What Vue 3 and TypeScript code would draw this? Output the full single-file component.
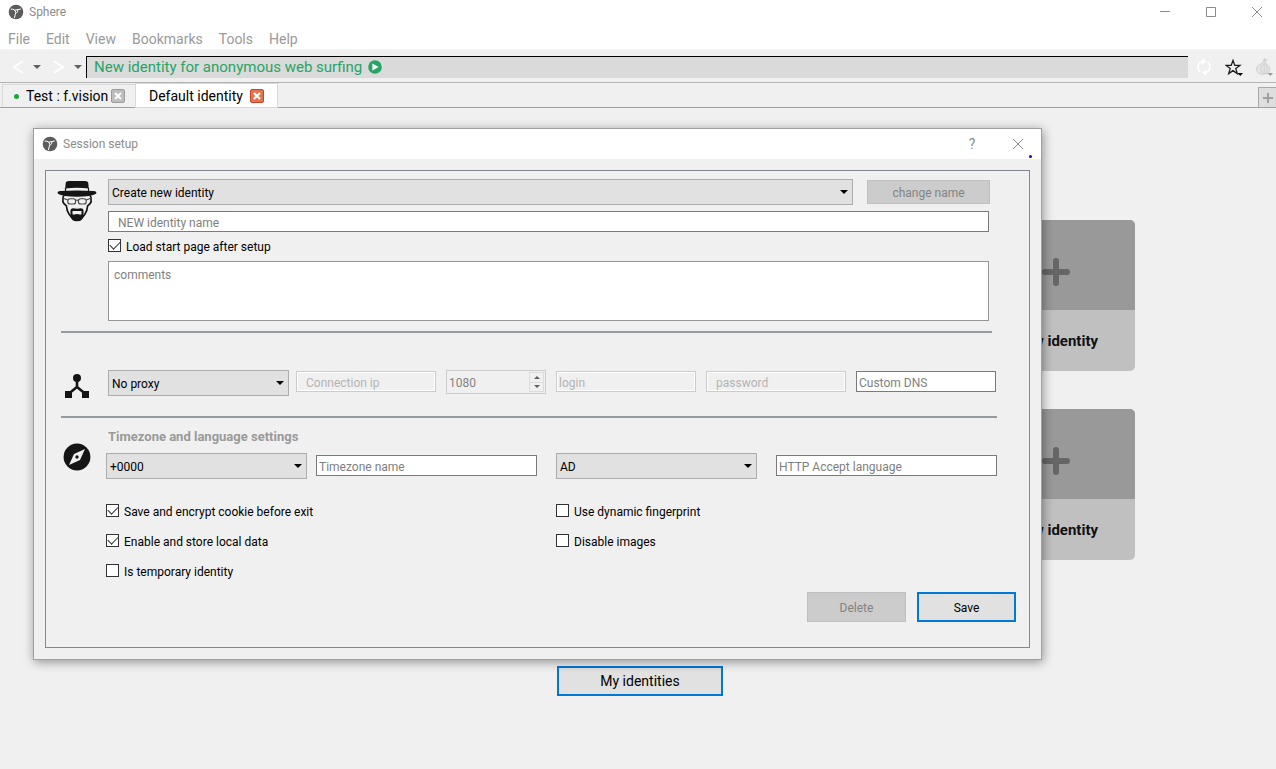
<script setup lang="ts">
import { ref } from 'vue'

interface Tick {
  id: string
  label: string
  checked: boolean
}

const menus: string[] = ['File', 'Edit', 'View', 'Bookmarks', 'Tools', 'Help']
const cards: string[] = ['New identity', 'New identity']

const address = ref('New identity for anonymous web surfing')
const loadStart = ref(true)
const port = ref('1080')
const ticks = ref<Tick[]>([
  { id: 'cookies', label: 'Save and encrypt cookie before exit', checked: true },
  { id: 'fingerprint', label: 'Use dynamic fingerprint', checked: false },
  { id: 'local', label: 'Enable and store local data', checked: true },
  { id: 'images', label: 'Disable images', checked: false },
  { id: 'temporary', label: 'Is temporary identity', checked: false },
])
</script>

<template>
  <div class="window">
    <header class="titlebar">
      <svg class="logo" viewBox="0 0 16 16" aria-hidden="true">
        <circle cx="8" cy="8" r="7.3" />
        <path d="M2.8 5.2Q5 4.6 7 6.4M6.6 6.2L12.8 5M9.8 5.8Q10.2 8 8 9.4M7 6.4Q8.4 8.4 7.4 10L6.4 14" />
      </svg>
      <span class="title">Sphere</span>
      <div class="win-controls">
        <button type="button" aria-label="Minimize"><svg viewBox="0 0 12 12"><path d="M1 5.5h10" /></svg></button>
        <button type="button" aria-label="Maximize"><svg viewBox="0 0 12 12"><path d="M1.5 1.5h9v9h-9z" /></svg></button>
        <button type="button" aria-label="Close"><svg viewBox="0 0 12 12"><path d="M1 1l10 10M11 1L1 11" /></svg></button>
      </div>
    </header>

    <nav class="menubar">
      <button v-for="m in menus" :key="m" type="button">{{ m }}</button>
    </nav>

    <div class="toolbar">
      <button class="chev" type="button" aria-label="Back"><svg viewBox="0 0 12 14"><path d="M11 1L2 7l9 6" /></svg></button>
      <button class="drop" type="button" aria-label="Back history"><svg viewBox="0 0 8 4"><path d="M0 0h8L4 4z" /></svg></button>
      <button class="chev" type="button" aria-label="Forward"><svg viewBox="0 0 12 14"><path d="M1 1l9 6-9 6" /></svg></button>
      <button class="drop" type="button" aria-label="Forward history"><svg viewBox="0 0 8 4"><path d="M0 0h8L4 4z" /></svg></button>
      <div class="address">
        <input v-model="address" type="text" aria-label="Address" />
        <button type="button" aria-label="Go">
          <svg viewBox="0 0 14 14"><circle cx="7" cy="7" r="6.8" fill="#27a567" /><path d="M4.4 3.4L10.6 7l-6.200 3.600z" fill="#fff" /></svg>
        </button>
      </div>
      <div class="tools">
        <button type="button" aria-label="Reload">
          <svg viewBox="0 0 18 20"><g fill="none" stroke="#fff" stroke-width="1.6"><path d="M5.2 15A6 6 0 0 1 7.6 4.4M12.6 5A6 6 0 0 1 10.4 15.6" /></g><path d="M7 1l4.2 3.3L7 7.6zM11 12.4v6.6L6.8 15.7z" fill="#fff" /></svg>
        </button>
        <button type="button" aria-label="Bookmark this page">
          <svg viewBox="0 0 18 20"><path d="M8 3.4l1.8 5h5.1l-4.100 3.200 1.500 5-4.300-3-4.300 3 1.500-5L1.100 8.400h5.100z" fill="none" stroke="#1c1c1c" stroke-width="1.3" /><path d="M12.5 16H18l-2.700 3z" fill="#000" /></svg>
        </button>
        <button type="button" aria-label="Tor">
          <svg viewBox="0 0 18 20"><path d="M9.4 1.500C8.800 3.400 8.600 4.600 6.800 6.200 4 8 1.500 9.400 1.500 12.400c0 3.200 3 4.900 6.700 4.900s6.700-1.700 6.700-4.900c0-3-2.500-4.300-4.500-6.200C9.800 5 11 3.200 12 2.500 10.600 2.600 9.800 3.400 9.400 4z" fill="#e4e4e4" stroke="#c6c6c6" stroke-width=".8" /><path d="M8.600 6.400C5.600 9 4.800 13 7.800 16.600M9.200 6.400V17M9.800 6.400C12.800 9 13.200 13.200 10.800 16.200" fill="none" stroke="#cdcdcd" stroke-width=".9" /><path d="M12.500 16H18l-2.700 3z" fill="#999" /></svg>
        </button>
      </div>
    </div>

    <div class="tabs">
      <div class="tab">
        <i class="dot"></i>
        <button class="tab-name" type="button">Test : f.vision</button>
        <button class="tab-close" type="button" aria-label="Close Test tab"><svg viewBox="0 0 8 8"><path d="M1 1l6 6M7 1L1 7" /></svg></button>
      </div>
      <div class="tab active">
        <button class="tab-name" type="button">Default identity</button>
        <button class="tab-close hot" type="button" aria-label="Close Default identity tab"><svg viewBox="0 0 8 8"><path d="M1 1l6 6M7 1L1 7" /></svg></button>
      </div>
      <button class="tab-add" type="button" aria-label="New tab"><svg viewBox="0 0 10 10"><path d="M5 0v10M0 5h10" /></svg></button>
    </div>

    <main class="page">
      <div class="cards">
        <button v-for="(c, i) in cards" :key="i" class="card" type="button">
          <span class="card-top"><svg viewBox="0 0 30 30"><path d="M15 4v22M4 15h22" /></svg></span>
          <span class="card-name">{{ c }}</span>
        </button>
      </div>
      <button class="primary mine" type="button">My identities</button>

      <section class="dialog" role="dialog" aria-labelledby="dialog-title">
        <header class="dialog-bar">
          <svg class="logo" viewBox="0 0 16 16" aria-hidden="true">
            <circle cx="8" cy="8" r="7.3" />
            <path d="M2.8 5.2Q5 4.6 7 6.4M6.6 6.2L12.8 5M9.8 5.8Q10.2 8 8 9.4M7 6.4Q8.4 8.4 7.4 10L6.4 14" />
          </svg>
          <span id="dialog-title" class="title">Session setup</span>
          <div class="win-controls">
            <button type="button">?</button>
            <button type="button" aria-label="Close dialog"><svg viewBox="0 0 12 12"><path d="M1 1l10 10M11 1L1 11" /></svg></button>
          </div>
          <i class="mark"></i>
        </header>

        <form class="panel" @submit.prevent>
          <div class="group identity">
            <svg class="face" viewBox="0 0 40 42" aria-hidden="true">
              <path d="M8.8 2.5Q9 1 12 1h16q3 0 3.2 1.5L31.8 8.500Q20 7.200 8.200 8.500z" fill="#151515" />
              <path d="M8.5 8v4M31.5 8v4" stroke="#151515" stroke-width="1.2" />
              <path d="M.5 13q0-2 3-1.900Q20 9.800 36.500 11.100q3-.1 3 1.900-.4 1.800-7.500 2.900-12 1.500-24 0Q.9 14.800.5 13z" fill="#151515" />
              <path d="M7 15.500Q5.400 17 6 19.500q-.8 2 1 4.200L9.400 26q.4 4.800 2.600 8l4 5M33 15.500q1.600 1.500 1 4 .8 2-1 4.200L30.600 26q-.4 4.800-2.600 8l-4 5" fill="none" stroke="#151515" stroke-width="1.7" />
              <g fill="none" stroke="#444" stroke-width="1.1"><rect x="10.800" y="18.800" width="7.800" height="5.200" rx="2.300" /><rect x="21.400" y="18.800" width="7.800" height="5.200" rx="2.300" /><path d="M18.600 20.400q1.400-.8 2.800 0M10.800 20L7 18.600M29.200 20l3.800-1.400" /></g>
              <path d="M13.500 30q.4-1.800 2.500-1.800l4 .5 4-.5q2.100 0 2.500 1.800v5.200h1.300L24.500 40q-1.200 1.200-4.500 1.200T15.500 40l-3.300-4.800h1.300z" fill="#151515" />
              <path d="M15.500 31h9v3.500h-2q-2.500-1-5 0h-2z" fill="#f0f0f0" />
            </svg>
            <div class="fields">
              <div class="row-name">
                <span class="combo">
                  <select aria-label="Identity"><option>Create new identity</option></select>
                  <svg viewBox="0 0 8 4"><path d="M0 0h8L4 4z" /></svg>
                </span>
                <button class="flat" type="button" disabled>change name</button>
              </div>
              <input class="box indent" type="text" placeholder="NEW identity name" aria-label="New identity name" />
              <label class="tick"><input v-model="loadStart" type="checkbox" /><span>Load start page after setup</span></label>
              <textarea class="box" placeholder="comments" aria-label="Comments"></textarea>
            </div>
          </div>

          <hr class="short" />

          <div class="group proxy">
            <svg class="net" viewBox="0 0 26 26" aria-hidden="true">
              <circle cx="13" cy="5" r="4" fill="#151515" />
              <path d="M13 6v8L5 20.500M13 14l8 6.500" fill="none" stroke="#151515" stroke-width="2.6" />
              <path d="M1 18h7v7H1zM18 18h7v7h-7z" fill="#151515" />
            </svg>
            <div class="row-proxy">
              <span class="combo">
                <select aria-label="Proxy type"><option>No proxy</option></select>
                <svg viewBox="0 0 8 4"><path d="M0 0h8L4 4z" /></svg>
              </span>
              <input class="box indent" type="text" placeholder="Connection ip" aria-label="Connection ip" disabled />
              <span class="spin">
                <input v-model="port" type="text" aria-label="Port" disabled />
                <span class="steps">
                  <button type="button" aria-label="Increase port" disabled><svg viewBox="0 0 6 3"><path d="M0 3h6L3 0z" /></svg></button>
                  <button type="button" aria-label="Decrease port" disabled><svg viewBox="0 0 6 3"><path d="M0 0h6L3 3z" /></svg></button>
                </span>
              </span>
              <input class="box" type="text" placeholder="login" aria-label="Login" disabled />
              <input class="box indent" type="password" placeholder="password" aria-label="Password" disabled />
              <input class="box" type="text" placeholder="Custom DNS" aria-label="Custom DNS" />
            </div>
          </div>

          <hr />

          <div class="group locale">
            <svg class="compass" viewBox="0 0 28 28" aria-hidden="true">
              <circle cx="14" cy="14" r="13.4" fill="#151515" />
              <path d="M22 6l-5 11-11 5 5-11z" fill="#f0f0f0" /><circle cx="14" cy="14" r="1.7" fill="#151515" />
            </svg>
            <div class="fields">
              <h2>Timezone and language settings</h2>
              <div class="row-locale">
                <span class="combo">
                  <select aria-label="Timezone offset"><option>+0000</option></select>
                  <svg viewBox="0 0 8 4"><path d="M0 0h8L4 4z" /></svg>
                </span>
                <input class="box" type="text" placeholder="Timezone name" aria-label="Timezone name" />
                <span class="combo">
                  <select aria-label="Country"><option>AD</option></select>
                  <svg viewBox="0 0 8 4"><path d="M0 0h8L4 4z" /></svg>
                </span>
                <input class="box" type="text" placeholder="HTTP Accept language" aria-label="HTTP Accept language" />
              </div>
              <div class="ticks">
                <label v-for="t in ticks" :key="t.id" class="tick"><input v-model="t.checked" type="checkbox" /><span>{{ t.label }}</span></label>
              </div>
            </div>
          </div>

          <div class="actions">
            <button class="flat" type="button" disabled>Delete</button>
            <button class="primary" type="submit">Save</button>
          </div>
        </form>
      </section>
    </main>
  </div>
</template>

<style>
body {
  margin: 0;
  background: #f0f0f0;
}
</style>

<style scoped>
* {
  box-sizing: border-box;
}
.window {
  display: flex;
  flex-direction: column;
  min-height: 100vh;
  background: #f0f0f0;
  color: #000;
  font-family: Roboto, "Liberation Sans", sans-serif;
  font-size: 12px;
  line-height: 16px;
}
button,
input,
select,
textarea {
  margin: 0;
  padding: 0;
  border: 0;
  border-radius: 0;
  background: none;
  color: inherit;
  font: inherit;
}
svg {
  display: block;
}

/* title bars */
.titlebar {
  display: flex;
  align-items: center;
  height: 24px;
  padding-left: 8px;
  background: #fff;
}
.logo {
  width: 16px;
  height: 16px;
}
.logo circle {
  fill: #5c5c5c;
}
.logo path {
  fill: none;
  stroke: #fff;
  stroke-width: 1;
}
.title {
  margin-left: 5px;
  color: #8c8c8c;
}
.win-controls {
  display: flex;
  margin-left: auto;
}
.win-controls button {
  display: flex;
  align-items: center;
  justify-content: center;
  width: 46px;
  height: 24px;
  color: #8c8c8c;
  font-size: 14px;
}
.win-controls svg {
  width: 12px;
  height: 12px;
  fill: none;
  stroke: #8c8c8c;
}
.titlebar .win-controls {
  margin-right: -4px;
  overflow: hidden;
}

/* menu */
.menubar {
  display: flex;
  gap: 16px;
  height: 27px;
  padding: 0 8px;
  border-bottom: 2px solid #f2f2f2;
  background: #fff;
  font-size: 14px;
}
.menubar button {
  height: 30px;
  color: #9a9a9a;
}

/* toolbar */
.toolbar {
  display: flex;
  align-items: center;
  height: 32px;
  padding-left: 12px;
  border-bottom: 1px solid #b4b4b4;
}
.chev svg {
  width: 12px;
  height: 14px;
  fill: none;
  stroke: #fff;
  stroke-width: 2;
}
.drop svg {
  width: 8px;
  height: 4px;
  fill: #606060;
}
.drop {
  margin: 0 12px 0 9px;
}
.drop + .chev + .drop {
  margin-right: 4px;
}
.address {
  display: flex;
  flex: 1;
  align-items: center;
  gap: 6px;
  min-width: 0;
  height: 22px;
  padding-left: 7px;
  border-top: 1px solid #000;
  border-left: 1px solid #000;
  background: #dadada;
}
.address input {
  height: 20px;
  padding-bottom: 1px;
  field-sizing: content;
  color: #27a567;
  font-size: 15px;
  line-height: 18px;
}
.address svg {
  width: 14px;
  height: 14px;
}
.tools {
  display: flex;
  gap: 12px;
  margin-right: 3px;
  padding-left: 7px;
}
.tools svg {
  width: 18px;
  height: 20px;
}

/* tabs */
.tabs {
  display: flex;
  align-items: flex-end;
  height: 25px;
  padding-left: 2px;
  border-bottom: 1px solid #a0a0a0;
  font-size: 14px;
}
.tab {
  display: flex;
  align-items: center;
  min-width: 133px;
  height: 23px;
  padding: 0 10px 0 11px;
  border: 1px solid #d9d9d9;
  border-width: 1px 0 0 1px;
}
.tab.active {
  min-width: 143px;
  height: 25px;
  margin-bottom: -1px;
  padding: 0 13px;
  border-width: 1px;
  background: #fff;
}
.dot {
  width: 5px;
  height: 5px;
  margin-right: 7px;
  border-radius: 50%;
  background: #1fa53c;
}
.tab-close {
  display: flex;
  align-items: center;
  justify-content: center;
  width: 14px;
  height: 14px;
  margin-left: auto;
  border: 1px solid #9b9b9b;
  border-radius: 2px;
  background: #bdbdbd;
}
.tab-close.hot {
  border-color: #cf3f2b;
  background: #e2764f;
}
.tab-close svg {
  width: 8px;
  height: 8px;
  fill: none;
  stroke: #fff;
  stroke-width: 2;
}
.tab-add {
  display: flex;
  align-items: center;
  justify-content: center;
  width: 18px;
  height: 20px;
  margin-left: auto;
  border: 1px solid #a8a8a8;
  border-width: 1px 0 0 1px;
  background: #dedede;
}
.tab-add svg {
  width: 10px;
  height: 10px;
  fill: none;
  stroke: #a0a0a0;
  stroke-width: 2;
}

/* page behind the dialog */
.page {
  position: relative;
  display: flex;
  flex: 1;
  flex-direction: column;
  align-items: center;
  padding-top: 112px;
}
.cards {
  display: flex;
  flex-direction: column;
  align-items: flex-end;
  gap: 38px;
  width: 100%;
  max-width: 994px;
}
.card {
  display: flex;
  flex-direction: column;
  width: 158px;
  overflow: hidden;
  border-radius: 5px;
  background: #c0c0c0;
}
.card-top {
  display: flex;
  align-items: center;
  justify-content: center;
  width: 100%;
  height: 90px;
  padding-top: 13px;
  background: #99999a;
}
.card-top svg {
  width: 30px;
  height: 30px;
  fill: none;
  stroke: #666;
  stroke-width: 6;
  stroke-linecap: round;
}
.card-name {
  width: 100%;
  padding: 23px 0 22px;
  color: #111;
  font-size: 15px;
  font-weight: 700;
}
.primary {
  border: 2px solid #0078d7;
  background: #e1e1e1;
}
.mine {
  width: 166px;
  height: 30px;
  margin-top: 106px;
  margin-left: 4px;
  font-size: 14px;
}

/* dialog */
.dialog {
  position: absolute;
  top: 20px;
  right: 234px;
  left: 33px;
  border: 1px solid #a0a0a0;
  background: #f0f0f0;
  box-shadow: 1px 2px 10px rgba(0, 0, 0, 0.4);
}
.dialog-bar {
  position: relative;
  display: flex;
  align-items: center;
  height: 30px;
  padding-left: 8px;
  background: #fff;
}
.mark {
  position: absolute;
  right: 9px;
  bottom: 1px;
  width: 3px;
  height: 3px;
  border-radius: 50%;
  background: #00f;
}
.panel {
  margin: 11px;
  padding: 8px 0 25px;
  border: 1px solid #828790;
}
.group {
  display: grid;
  grid-template-columns: 62px minmax(0, 1fr);
}
.fields {
  display: flex;
  flex-direction: column;
}
.identity {
  padding-right: 39px;
}
.face {
  width: 40px;
  height: 42px;
  margin: 1px 0 0 11px;
}
.row-name {
  display: grid;
  grid-template-columns: minmax(0, 1fr) 123px;
  gap: 14px;
  align-items: center;
  margin-bottom: 6px;
}
.row-name .flat {
  height: 24px;
}
.combo {
  display: grid;
  align-items: center;
}
.combo select,
.combo svg {
  grid-area: 1 / 1;
}
.combo select {
  width: 100%;
  height: 26px;
  padding: 2px 20px 0 3px;
  border: 1px solid #adadad;
  background: #e1e1e1;
  appearance: none;
}
.combo svg {
  justify-self: end;
  width: 8px;
  height: 4px;
  margin-right: 5px;
  pointer-events: none;
}
.flat {
  border: 1px solid #bfbfbf;
  background: #ccc;
  color: #838383;
}
.flat,
.actions .primary {
  padding-top: 1px;
}
.box {
  width: 100%;
  height: 21px;
  padding: 2px 2px 0;
  border: 1px solid #7a7a7a;
  background: #fff;
}
.box.indent {
  padding-left: 9px;
}
.box::placeholder {
  color: #7f7f7f;
  opacity: 1;
}
.box:disabled {
  border-color: #ccc;
  background: #f0f0f0;
  box-shadow: inset 0 0 0 1px #fff;
}
.box:disabled::placeholder {
  color: #b4b4b4;
}
.identity .box {
  width: calc(100% - 1px);
}
textarea.box {
  display: block;
  height: 60px;
  padding: 5px;
  border-color: #969696;
  resize: none;
}
.tick {
  display: flex;
  align-items: center;
  gap: 5px;
  height: 13px;
}
.tick span {
  padding-top: 2px;
}
.tick input {
  width: 13px;
  height: 13px;
  border: 1px solid #333;
  background: #fff;
  appearance: none;
}
.tick input:checked::before {
  display: block;
  width: 9px;
  height: 5px;
  margin: 1px;
  border: solid #333;
  border-width: 0 0 1px 1px;
  content: "";
  transform: rotate(-45deg);
}
.identity .tick {
  margin: 7px 0 9px;
}
hr {
  height: 2px;
  margin: 20px 32px 11px 15px;
  border: 0;
  background: #959a9e;
}
hr.short {
  margin: 10px 37px 37px 15px;
}
.locale {
  padding-right: 32px;
}
.proxy {
  padding-right: 33px;
}
.net {
  width: 26px;
  height: 26px;
  margin: 3px 0 -3px 18px;
}
.row-proxy {
  display: grid;
  grid-template-columns: 188fr 150fr 110fr 150fr 150fr 140fr;
}
.row-proxy > * {
  width: auto;
  min-width: 0;
  margin-right: 10px;
}
.row-proxy > .combo {
  margin-right: 7px;
}
.row-proxy > :last-child {
  margin-right: 0;
}
.row-proxy > .box {
  margin-top: 1px;
}
.spin {
  display: flex;
  height: 24px;
  padding: 1px;
  border: 1px solid #ccc;
  color: #838383;
}
.spin input {
  flex: 1;
  min-width: 0;
  padding: 1px 0 0 1px;
}
.steps {
  display: grid;
  width: 15px;
  border: 1px solid #dcdcdc;
}
.steps button {
  display: flex;
  align-items: center;
  justify-content: center;
}
.steps button + button {
  border-top: 1px solid #dcdcdc;
}
.steps svg {
  width: 6px;
  height: 3px;
  fill: #606060;
}
.compass {
  width: 28px;
  height: 28px;
  margin: 14px 0 0 17px;
}
h2 {
  margin: 0 0 8px;
  color: #999;
  font-size: 13px;
  font-weight: 700;
  line-height: 16px;
}
.row-locale {
  display: grid;
  grid-template-columns: 210fr 240fr 220fr 221fr;
  margin-left: -2px;
}
.row-locale > * {
  width: auto;
  min-width: 0;
  margin-right: 19px;
}
.row-locale > .combo:first-child {
  margin-right: 9px;
}
.row-locale > :last-child {
  margin-right: 0;
}
.row-locale > .box {
  margin-top: 2px;
}
.ticks {
  display: grid;
  grid-template-columns: 450fr 441fr;
  row-gap: 17px;
  margin: 25px 0 15px -2px;
}
.actions {
  display: flex;
  justify-content: flex-end;
  gap: 11px;
  padding-right: 13px;
}
.actions button {
  width: 99px;
  height: 30px;
}
</style>
